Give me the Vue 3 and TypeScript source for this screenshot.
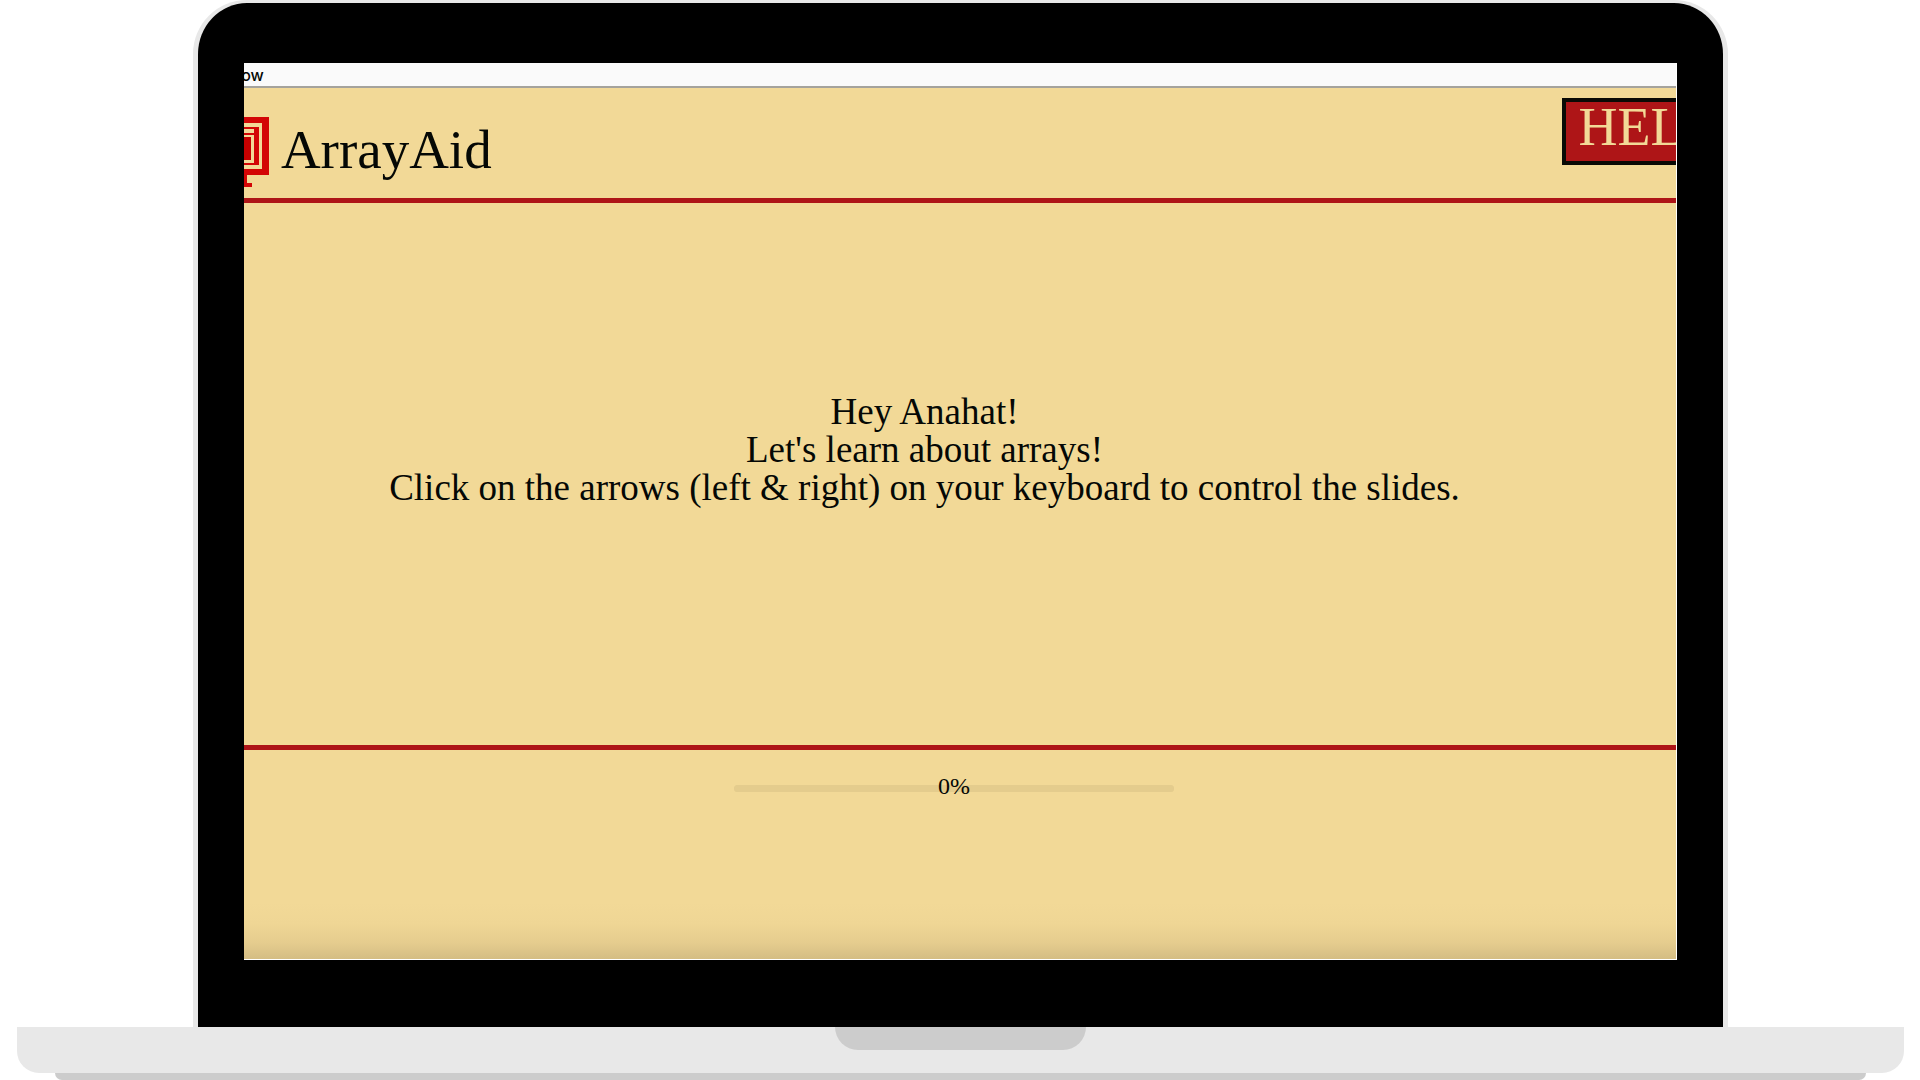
<script setup lang="ts">
import { ref } from 'vue'

const userName = ref('Anahat')
const progress = ref(0)
</script>

<template>
  <div class="laptop">
    <div class="lid">
      <div class="screen">
        <div class="menubar"><span class="menu-item">Window</span></div>
        <div class="app">
          <header class="header">
            <svg class="logo" viewBox="0 0 26 72" aria-hidden="true">
              <g fill="#d30505">
                <path d="M0 1h25v58H0v-6h18V7H0z" />
                <path d="M0 11h15v38H0v-2h10V19H0v-2h10v-4H0z" />
                <path class="core" d="M0 21h7v23H0z" />
                <path d="M0 59h3v8h5v4H0z" />
              </g>
            </svg>
            <h1 class="title">ArrayAid</h1>
            <button class="help" type="button">HELP</button>
          </header>
          <main class="slide">
            <p>Hey {{ userName }}!</p>
            <p>Let's learn about arrays!</p>
            <p>Click on the arrows (left &amp; right) on your keyboard to control the slides.</p>
          </main>
          <footer class="footer">
            <div class="meter">
              <progress id="lesson" class="bar" :value="progress" max="100"></progress>
              <label class="percent" for="lesson">{{ progress }}%</label>
            </div>
          </footer>
        </div>
      </div>
    </div>
    <div class="base"><div class="notch"></div></div>
    <div class="foot"></div>
  </div>
</template>

<style>
body {
  margin: 0;
  background: #fff;
}
</style>

<style scoped>
.laptop {
  box-sizing: border-box;
  display: flex;
  flex-direction: column;
  min-height: 100vh;
  padding-left: 1px;
  overflow: hidden;
  font-family: Palatino, "Palatino Linotype", "Liberation Serif", serif;
  color: #050805;
}
.lid {
  flex: 1;
  display: flex;
  margin: 0 10%;
  padding: 60px 46px 67px;
  border: 5px solid #e8e8e8;
  border-top-width: 3px;
  border-bottom: 0;
  border-radius: 54px 54px 0 0;
  background: #000;
}
.screen {
  flex: 1;
  min-width: 0;
  display: flex;
  flex-direction: column;
  overflow: hidden;
  border-right: 1px solid #fff;
  border-bottom: 1px solid #fff;
}
.menubar {
  display: flex;
  align-items: center;
  height: 23px;
  background: #fafafa;
  border-bottom: 2px solid #a5a39c;
}
.menu-item {
  display: flex;
  justify-content: flex-end;
  width: 20px;
  font: 500 16px/24px Inter, sans-serif;
}
.app {
  flex: 1;
  display: flex;
  flex-direction: column;
  background: linear-gradient(to top, #d4bd83 0, #e5cc8e 16px, #efd695 36px, #f2d997 56px);
}
.header {
  display: flex;
  align-items: flex-start;
  height: 110px;
}
.logo {
  width: 26px;
  height: 72px;
  margin-top: 28px;
  flex: none;
}
.core {
  fill: #c60000;
}
.title {
  margin: 30px auto 0 11px;
  font-size: 55px;
  line-height: 64px;
  font-weight: 400;
}
.help {
  flex: none;
  box-sizing: border-box;
  width: 168px;
  height: 67px;
  margin: 10px -54px 0 0;
  padding: 0 0 8px;
  border: 4px solid #0a0a05;
  background: #ae1517;
  color: #f2d997;
  font: 400 54px/51px Palatino, "Palatino Linotype", "Liberation Serif", serif;
}
.slide {
  flex: 1;
  display: flex;
  flex-direction: column;
  justify-content: center;
  padding: 0 71px 48px 0;
  border-top: 5px solid #ae1517;
  border-bottom: 5px solid #ae1517;
  text-align: center;
  font-size: 37px;
  line-height: 38px;
}
.slide p {
  margin: 0;
}
.footer {
  height: 174px;
  padding: 35px 12px 0 0;
}
.meter {
  position: relative;
  width: 31%;
  margin: 0 auto;
}
.bar {
  display: block;
  appearance: none;
  width: 100%;
  height: 7px;
  border: 0;
  border-radius: 4px;
  background: #e4cc8d;
  overflow: hidden;
}
.bar::-webkit-progress-bar {
  border-radius: 4px;
  background: #e4cc8d;
}
.bar::-webkit-progress-value {
  background: #ae1517;
}
.percent {
  position: absolute;
  inset: -13px 0 auto;
  text-align: center;
  font-size: 24px;
  line-height: 28px;
}
.base {
  height: 46px;
  margin: 0 16px;
  border-radius: 0 0 22px 22px;
  background: #e8e8e8;
}
.notch {
  width: 251px;
  height: 23px;
  margin: 0 auto;
  border-radius: 0 0 23px 23px;
  background: #ccc;
}
.foot {
  height: 7px;
  margin: 0 54px;
  border-radius: 0 0 7px 7px;
  background: #ccc;
}
</style>
